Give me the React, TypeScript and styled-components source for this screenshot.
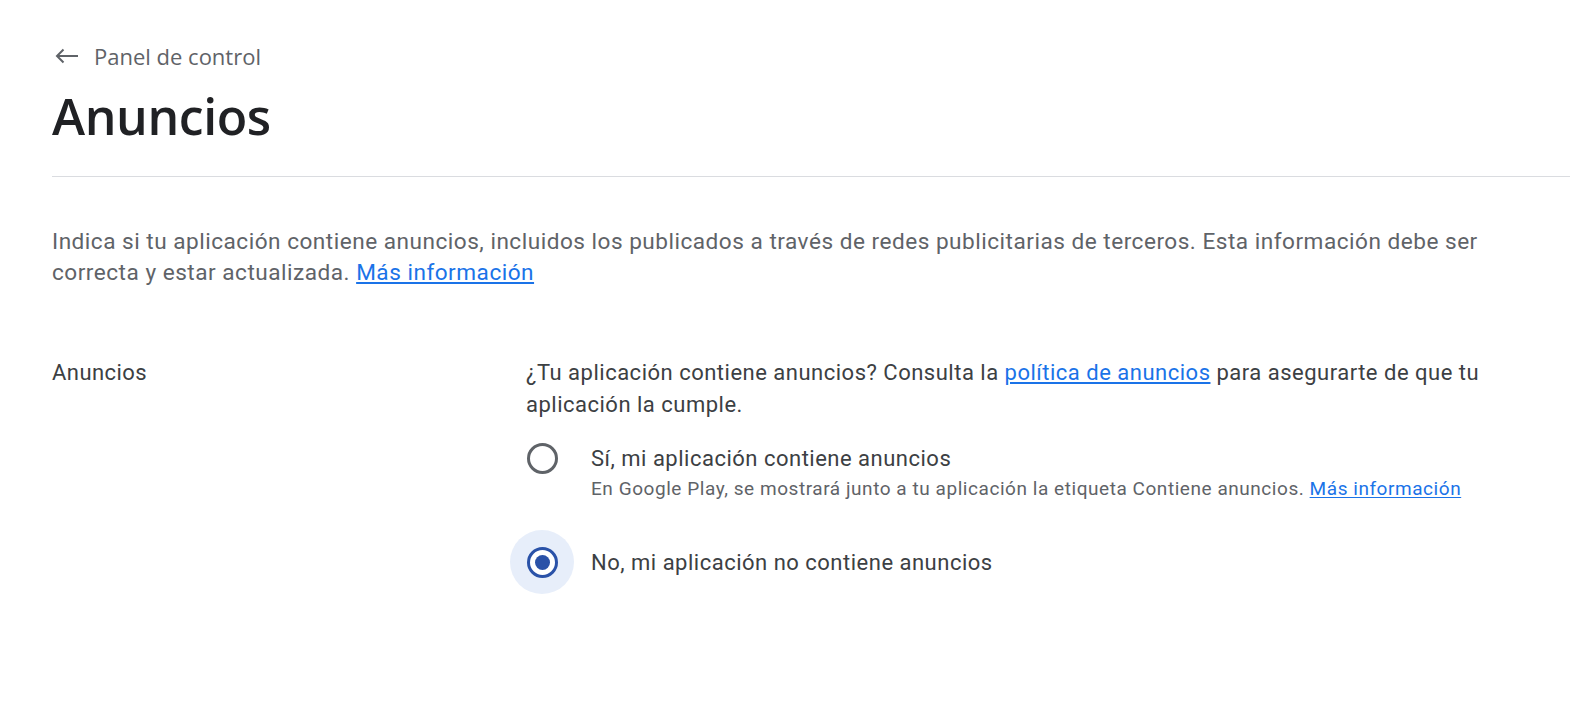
import React from "react";
import styled, { createGlobalStyle } from "styled-components";

const Global = createGlobalStyle`
  html, body { margin: 0; padding: 0; background: #ffffff; }
  body { font-family: Roboto, "Liberation Sans", Arial, sans-serif; color: #202124; }
  * { box-sizing: border-box; }
`;

const Page = styled.div`
  padding: 42px 0 0 52px;
  width: 1570px;
  min-height: 720px;
`;

const BackLink = styled.a`
  display: flex;
  align-items: center;
  gap: 15px;
  height: 28px;
  color: #5f6368;
  font-family: "Open Sans", Roboto, sans-serif;
  font-size: 22px;
  line-height: 28px;
  text-decoration: none;
  padding-left: 3px;
`;

const Title = styled.h1`
  margin: 18px 0 0 0;
  font-family: "Open Sans", Roboto, sans-serif;
  font-weight: 600;
  font-size: 50px;
  line-height: 56px;
  color: #202124;
  letter-spacing: -0.4px;
`;

const Divider = styled.hr`
  margin: 32px 0 0 0;
  border: none;
  border-top: 1px solid #dadce0;
  height: 0;
`;

const Description = styled.p`
  margin: 49px 0 0 0;
  padding-right: 40px;
  font-size: 22.6px;
  line-height: 31px;
  letter-spacing: 0.5px;
  color: #5f6368;
`;

const Link = styled.a`
  color: #1a73e8;
  text-decoration: underline;
  text-underline-offset: 2px;
`;

const FormRow = styled.div`
  display: grid;
  grid-template-columns: 474px 1fr;
  margin-top: 69px;
  padding-right: 60px;
`;

const FieldLabel = styled.div`
  font-size: 22px;
  line-height: 32px;
  letter-spacing: 0.45px;
  color: #3c4043;
`;

const FieldBody = styled.div`
  display: flex;
  flex-direction: column;
`;

const Question = styled.p`
  margin: 0;
  font-size: 22px;
  line-height: 32px;
  letter-spacing: 0.5px;
  color: #3c4043;
`;

const Options = styled.div`
  display: flex;
  flex-direction: column;
  gap: 27px;
  margin-top: 5px;
  margin-left: -16px;
`;

const OptionRow = styled.label`
  display: flex;
  align-items: flex-start;
  gap: 17px;
  cursor: pointer;
`;

const RadioHit = styled.span<{ $checked: boolean }>`
  flex: none;
  width: 64px;
  height: 64px;
  border-radius: 50%;
  display: flex;
  align-items: center;
  justify-content: center;
  background: ${(p) => (p.$checked ? "#e7eefa" : "transparent")};
`;

const RadioCircle = styled.span<{ $checked: boolean }>`
  width: 31px;
  height: 31px;
  border-radius: 50%;
  border: 3px solid ${(p) => (p.$checked ? "#2a52a8" : "#5f6368")};
  display: flex;
  align-items: center;
  justify-content: center;
  background: #fff;
`;

const RadioDot = styled.span`
  width: 15px;
  height: 15px;
  border-radius: 50%;
  background: #2a52a8;
`;

const OptionText = styled.span`
  display: flex;
  flex-direction: column;
  padding-top: 17px;
`;

const OptionLabel = styled.span`
  font-size: 22px;
  line-height: 32px;
  letter-spacing: 0.5px;
  color: #3c4043;
`;

const OptionHint = styled.span`
  font-size: 19px;
  line-height: 28px;
  letter-spacing: 0.55px;
  color: #5f6368;
`;

type Opt = { label: string; hint?: boolean; checked: boolean };

const options: Opt[] = [
  { label: "Sí, mi aplicación contiene anuncios", hint: true, checked: false },
  { label: "No, mi aplicación no contiene anuncios", checked: true },
];

const BackArrow = () => (
  <svg width="24" height="16" viewBox="0 0 24 16" fill="none">
    <path d="M23 8H2M8.5 1.5L2 8l6.5 6.5" stroke="#5f6368" strokeWidth="2" />
  </svg>
);

export default function App() {
  return (
    <>
      <Global />
      <Page>
        <BackLink href="#">
          <BackArrow />
          Panel de control
        </BackLink>
        <Title>Anuncios</Title>
        <Divider />
        <Description>
          Indica si tu aplicación contiene anuncios, incluidos los publicados a través de redes
          publicitarias de terceros. Esta información debe ser correcta y estar actualizada.{" "}
          <Link href="#">Más información</Link>
        </Description>
        <FormRow>
          <FieldLabel>Anuncios</FieldLabel>
          <FieldBody>
            <Question>
              ¿Tu aplicación contiene anuncios? Consulta la{" "}
              <Link href="#">política de anuncios</Link> para asegurarte de que tu aplicación la
              cumple.
            </Question>
            <Options>
              {options.map((o) => (
                <OptionRow key={o.label}>
                  <RadioHit $checked={o.checked}>
                    <RadioCircle $checked={o.checked}>{o.checked && <RadioDot />}</RadioCircle>
                  </RadioHit>
                  <OptionText>
                    <OptionLabel>{o.label}</OptionLabel>
                    {o.hint && (
                      <OptionHint>
                        En Google Play, se mostrará junto a tu aplicación la etiqueta Contiene
                        anuncios. <Link href="#">Más información</Link>
                      </OptionHint>
                    )}
                  </OptionText>
                </OptionRow>
              ))}
            </Options>
          </FieldBody>
        </FormRow>
      </Page>
    </>
  );
}
